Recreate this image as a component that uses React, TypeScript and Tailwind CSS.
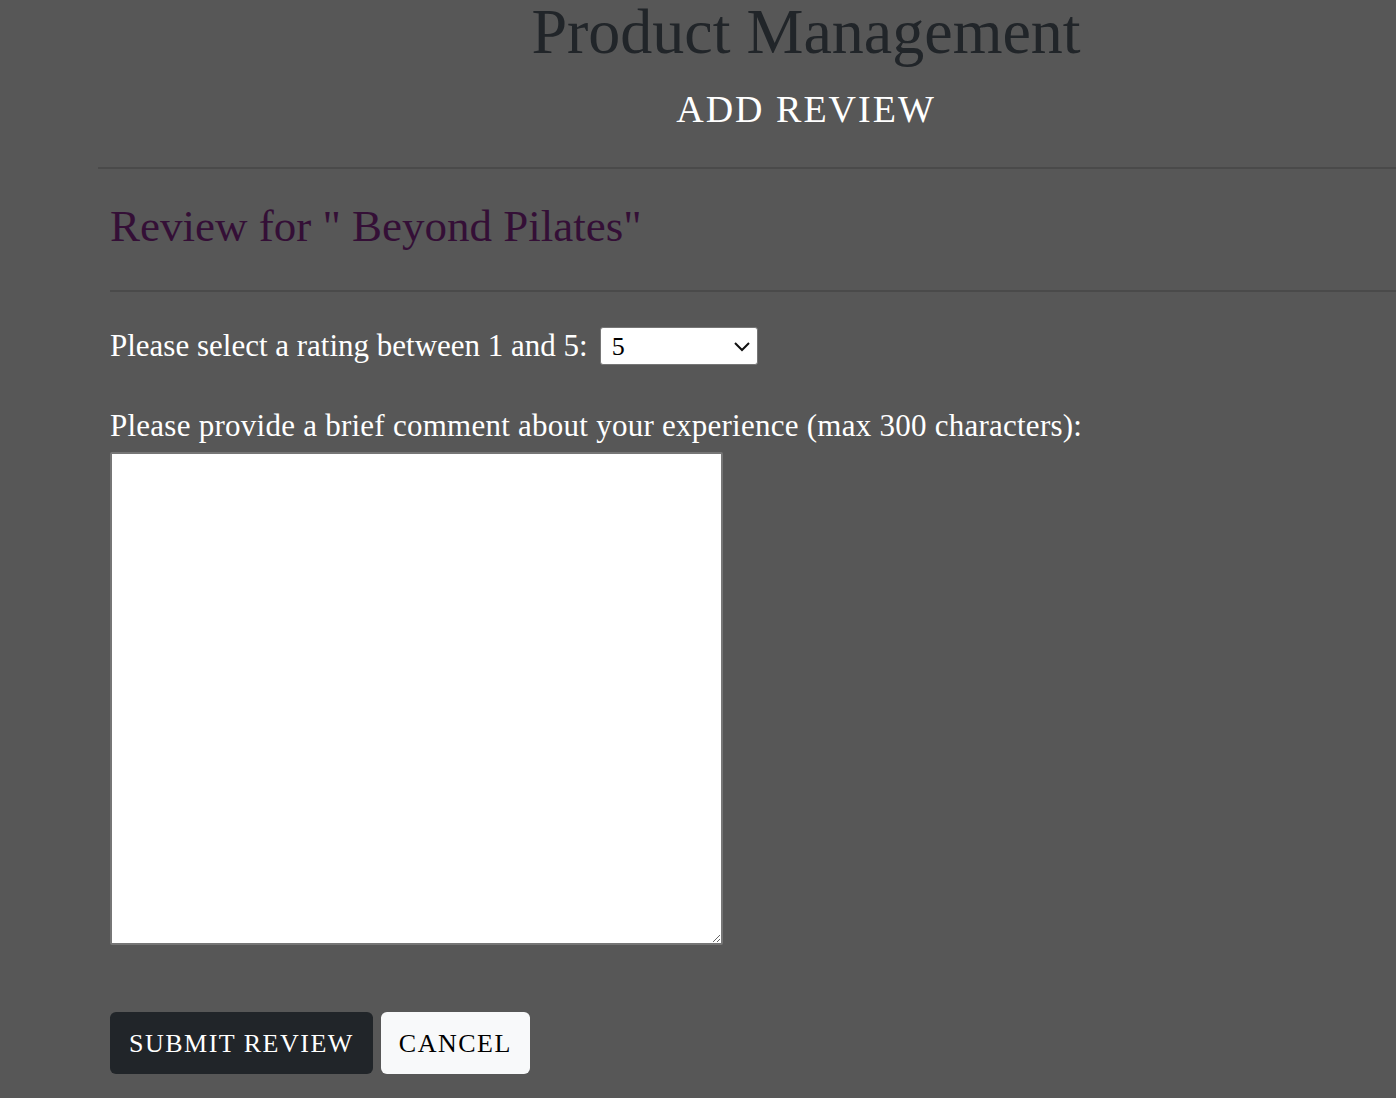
import { useState } from "react";

const serif = { fontFamily: '"Liberation Serif", "DejaVu Serif", serif' };

export default function App() {
  const [rating, setRating] = useState("5");
  const [comment, setComment] = useState("");

  return (
    <div className="min-h-screen w-full overflow-hidden bg-[#575757]" style={serif}>
      <div className="ml-[98px] w-[1416px]">
        <div className="text-center">
          <h1 className="text-[64px] leading-[64px] text-[#212529]">Product Management</h1>
          <h2 className="mt-[21px] text-[38px] leading-[48px] tracking-[2px] text-white">ADD REVIEW</h2>
        </div>

        <hr className="mt-[34px] border-t-2 border-[#4a4a4a]" />

        <div className="px-3">
          <h3 className="mt-[29px] text-[45px] leading-[56px] text-[#340f36]">Review for " Beyond Pilates"</h3>
          <hr className="mt-[36px] border-t-2 border-[#4a4a4a]" />

          <form className="mt-[34px]" onSubmit={(e) => e.preventDefault()}>
            <div className="flex items-center gap-[12px]">
              <label htmlFor="rating" className="text-[31px] leading-[40px] text-white">
                Please select a rating between 1 and 5:
              </label>
              <div className="relative">
                <select
                  id="rating"
                  value={rating}
                  onChange={(e) => setRating(e.target.value)}
                  className="block h-[38px] w-[158px] appearance-none rounded-[3px] border border-[#767676] bg-white pl-[11px] pt-[2px] text-[26px] leading-[34px] text-black"
                  style={serif}
                >
                  <option>1</option>
                  <option>2</option>
                  <option>3</option>
                  <option>4</option>
                  <option>5</option>
                </select>
                <svg
                  className="pointer-events-none absolute right-[7px] top-[13px]"
                  width="18"
                  height="12"
                  viewBox="0 0 18 12"
                  fill="none"
                  stroke="#111"
                  strokeWidth="2"
                >
                  <path d="M2 3l7 7 7-7" />
                </svg>
              </div>
            </div>

            <label htmlFor="comment" className="mt-[40px] block text-[31px] leading-[40px] tracking-[0.25px] text-white">
              Please provide a brief comment about your experience (max 300 characters):
            </label>
            <textarea
              id="comment"
              maxLength={300}
              value={comment}
              onChange={(e) => setComment(e.target.value)}
              className="mt-[6px] block h-[493px] w-[613px] rounded-[2px] border-2 border-[#767676] bg-white"
            />

            <div className="mt-[67px] flex gap-2">
              <button
                type="submit"
                className="h-[62px] rounded-[6px] bg-[#212529] px-[19px] text-[26px] tracking-[1.5px] text-white"
                style={serif}
              >
                SUBMIT REVIEW
              </button>
              <button
                type="button"
                className="h-[62px] rounded-[6px] bg-[#f8f9fa] px-[18px] text-[26px] tracking-[1.5px] text-black"
                style={serif}
              >
                CANCEL
              </button>
            </div>
          </form>
        </div>
      </div>
    </div>
  );
}
